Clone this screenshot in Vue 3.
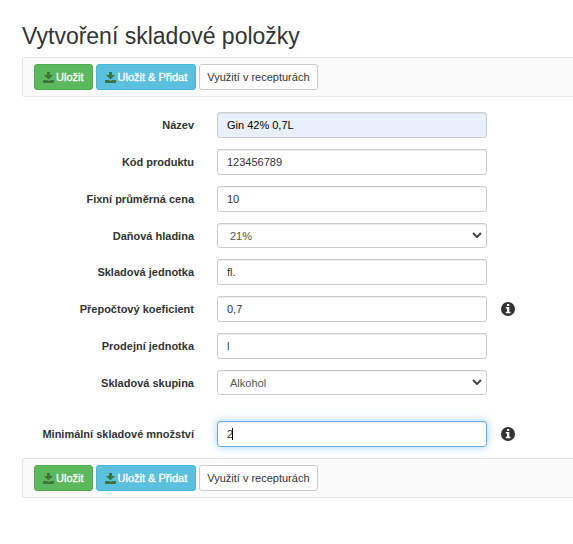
<template>
  <form class="stock-form" @submit.prevent>
    <h1 class="title">Vytvoření skladové položky</h1>

    <div class="toolbar">
      <button v-for="action in actions" :key="action.label" type="button" class="btn" :class="action.type">
        <svg v-if="action.icon" class="save-icon" viewBox="0 0 11 11" aria-hidden="true">
          <path d="M4 0h3v3h3L5.5 7.5 1 3h3zM0 8h4l1.5 1L7 8h4v3H0z" />
        </svg>
        {{ action.label }}
      </button>
    </div>

    <div class="fields">
      <div v-for="field in fields" :key="field.id" class="form-row" :class="{ separated: field.separated }">
        <label :for="field.id">{{ field.label }}</label>
        <div class="control-wrap">
          <template v-if="field.options">
            <select :id="field.id" v-model="field.value" class="control">
              <option v-for="option in field.options" :key="option">{{ option }}</option>
            </select>
            <svg class="arrow" viewBox="0 0 10 6" aria-hidden="true">
              <path d="M1 1l4 4 4-4" />
            </svg>
          </template>
          <template v-else>
            <input :id="field.id" v-model="field.value" type="text" class="control" :class="{ autofilled: field.autofilled }" />
            <span class="caret" aria-hidden="true"></span>
          </template>
        </div>
        <svg v-if="field.info" class="info-icon" viewBox="0 0 14 14" role="img" aria-label="Info">
          <circle cx="7" cy="7" r="7" />
          <path d="M6 2h2.3v2H6zM4.8 5h3.5v4.8h1.2v1.5H4.8V9.8H6V6.5H4.8z" />
        </svg>
      </div>
    </div>

    <div class="toolbar">
      <button v-for="action in actions" :key="action.label" type="button" class="btn" :class="action.type">
        <svg v-if="action.icon" class="save-icon" viewBox="0 0 11 11" aria-hidden="true">
          <path d="M4 0h3v3h3L5.5 7.5 1 3h3zM0 8h4l1.5 1L7 8h4v3H0z" />
        </svg>
        {{ action.label }}
      </button>
    </div>
  </form>
</template>

<script setup>
import { onMounted, ref } from 'vue'

const actions = [
  { label: 'Uložit', type: 'btn-success', icon: true },
  { label: 'Uložit & Přidat', type: 'btn-info', icon: true },
  { label: 'Využití v recepturách', type: 'btn-default' }
]

const fields = ref([
  { id: 'name', label: 'Název', value: 'Gin 42% 0,7L', autofilled: true },
  { id: 'code', label: 'Kód produktu', value: '123456789' },
  { id: 'price', label: 'Fixní průměrná cena', value: '10' },
  { id: 'tax', label: 'Daňová hladina', value: '21%', options: ['21%'] },
  { id: 'stock-unit', label: 'Skladová jednotka', value: 'fl.' },
  { id: 'ratio', label: 'Přepočtový koeficient', value: '0,7', info: true },
  { id: 'sale-unit', label: 'Prodejní jednotka', value: 'l' },
  { id: 'group', label: 'Skladová skupina', value: 'Alkohol', options: ['Alkohol'] },
  { id: 'minimum', label: 'Minimální skladové množství', value: '2', info: true, separated: true }
])

onMounted(() => {
  document.getElementById('minimum').focus()
})
</script>

<style>
body {
  margin: 0;
  background: #fff;
}
</style>

<style scoped>
.stock-form {
  padding: 22px 0 0 22px;
  font-family: "Liberation Sans", Arial, sans-serif;
  font-size: 11px;
  line-height: 16px;
  color: #333;
}

.title {
  margin: 0 0 7px;
  font-size: 23px;
  font-weight: normal;
  line-height: 28px;
}

.toolbar {
  display: flex;
  gap: 3px;
  padding: 6px 11px;
  background: #fafafa;
  border: 1px solid #e5e5e5;
  border-right: none;
  border-radius: 3px 0 0 3px;
}

.btn {
  display: flex;
  align-items: center;
  gap: 2px;
  height: 26px;
  padding: 0 8px;
  font: inherit;
  white-space: nowrap;
  border: 1px solid #ccc;
  border-radius: 3px;
  cursor: pointer;
}

.btn-default {
  padding: 0 7px;
  background: #fff;
  color: #333;
}

.btn-success,
.btn-info {
  color: #fff;
  -webkit-text-stroke: 0.3px #fff;
}

.btn-success {
  background: #5cb85c;
  border-color: #4cae4c;
}

.btn-info {
  background: #5bc0de;
  border-color: #46b8da;
}

.save-icon {
  width: 11px;
  height: 11px;
  fill: #3c763d;
}

.fields {
  padding: 15px 0 11px;
}

.form-row {
  display: grid;
  grid-template-columns: 195px minmax(0, 270px) 28px;
  align-items: center;
  margin-bottom: 11px;
}

.form-row.separated {
  margin-top: 26px;
  margin-bottom: 0;
}

label {
  padding-right: 23px;
  font-weight: bold;
  text-align: right;
}

.control-wrap {
  display: flex;
  position: relative;
}

.control {
  box-sizing: border-box;
  width: 100%;
  height: 26px;
  padding: 0 9px;
  font: inherit;
  color: #333;
  background: #fff;
  border: 1px solid #ccc;
  border-radius: 3px;
  box-shadow: inset 0 1px 1px rgba(0, 0, 0, 0.075);
}

.control:focus {
  border-color: #66afe9;
  outline: none;
  caret-color: transparent;
  box-shadow: inset 0 1px 1px rgba(0, 0, 0, 0.075), 0 0 8px rgba(102, 175, 233, 0.6);
}

.autofilled {
  color: #000;
  background: #e8f0fe;
}

.caret {
  display: none;
  position: absolute;
  top: 7px;
  left: 15px;
  width: 1px;
  height: 12px;
  background: #000;
}

.control:focus + .caret {
  display: block;
}

select.control {
  height: 25px;
  padding-left: 12px;
  color: #555;
  appearance: none;
}

.arrow {
  position: absolute;
  top: 9px;
  right: 5px;
  width: 10px;
  height: 6px;
  fill: none;
  stroke: #444;
  stroke-width: 2;
  pointer-events: none;
}

.info-icon {
  width: 14px;
  height: 14px;
  margin-left: 14px;
  fill: #333;
}

.info-icon path {
  fill: #fff;
}
</style>
